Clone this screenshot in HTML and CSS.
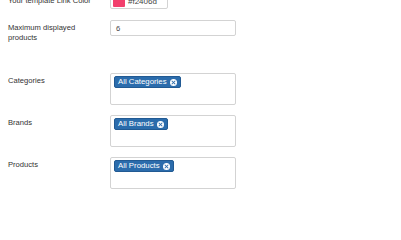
FILE: index.html
```html
<!DOCTYPE html>
<html>
<head>
<meta charset="utf-8">
<link rel="stylesheet" href="styles.css">
</head>
<body>
<div class="form">
  <div class="row">
    <div class="label">Your template Link Color</div>
    <div class="field">
      <div class="input color-input"><span class="swatch"></span><span class="hex">#f2406d</span></div>
    </div>
  </div>
  <div class="row row-wide">
    <div class="label">Maximum displayed<br>products</div>
    <div class="field">
      <div class="input text-input">6</div>
    </div>
  </div>
  <div class="row">
    <div class="label">Categories</div>
    <div class="field">
      <div class="multi"><span class="tag">All Categories<span class="x"></span></span></div>
    </div>
  </div>
  <div class="row">
    <div class="label">Brands</div>
    <div class="field">
      <div class="multi"><span class="tag">All Brands<span class="x"></span></span></div>
    </div>
  </div>
  <div class="row">
    <div class="label">Products</div>
    <div class="field">
      <div class="multi"><span class="tag">All Products<span class="x"></span></span></div>
    </div>
  </div>
</div>
</body>
</html>
```
FILE: styles.css
```css
body {
  margin: 0;
  background: #fff;
  font-family: "Liberation Sans", Arial, sans-serif;
  font-size: 7.6px;
  color: #333;
}
.form {
  margin-top: -7px;
  padding-left: 8px;
}
.row {
  display: flex;
  align-items: flex-start;
  margin-bottom: 11px;
}
.row-wide {
  margin-bottom: 30px;
}
.label {
  width: 102px;
  padding-top: 3px;
  line-height: 10px;
}
.field {
  width: 126px;
}
.input {
  box-sizing: border-box;
  height: 16px;
  border: 1px solid #d3d3d3;
  border-radius: 2px;
  background: #fff;
  display: flex;
  align-items: center;
}
.color-input {
  width: 58px;
  padding-left: 2px;
}
.swatch {
  width: 12px;
  height: 12px;
  background: #f2406d;
  border-radius: 1px;
}
.hex {
  margin-left: 3px;
  color: #444;
  font-size: 8px;
}
.text-input {
  width: 126px;
  padding-left: 5px;
  color: #444;
}
.multi {
  box-sizing: border-box;
  width: 126px;
  height: 32px;
  border: 1px solid #d3d3d3;
  border-radius: 2px;
  padding: 2px 3px;
  margin-bottom: -1px;
}
.tag {
  display: inline-flex;
  align-items: center;
  height: 12px;
  padding: 0 3px 0 3px;
  background: #2b6cac;
  border: 1px solid #215a93;
  box-sizing: border-box;
  border-radius: 2px;
  color: #fff;
  line-height: 10px;
  font-size: 7.8px;
}
.x {
  position: relative;
  width: 7px;
  height: 7px;
  margin-left: 3px;
  border-radius: 50%;
  background: #fff;
}
.x::before,
.x::after {
  content: "";
  position: absolute;
  left: 3px;
  top: 1px;
  width: 1px;
  height: 5px;
  background: #2b6cac;
  transform: rotate(45deg);
}
.x::after {
  transform: rotate(-45deg);
}
```
